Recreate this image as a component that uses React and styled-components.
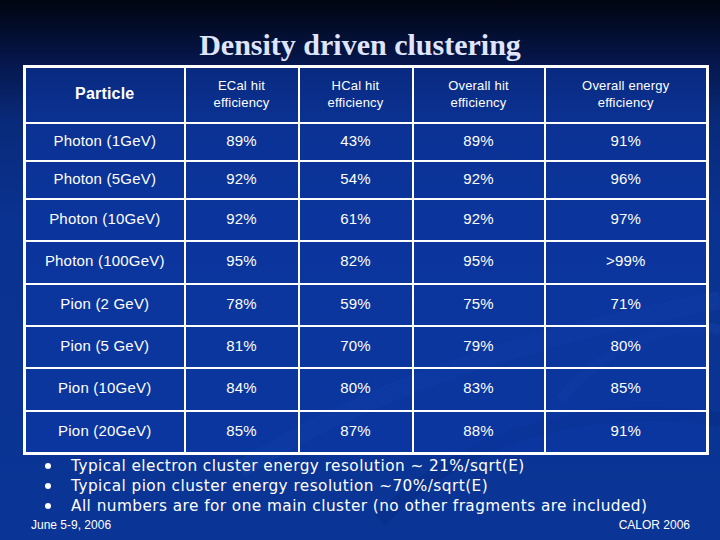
import React from 'react'
import styled, {createGlobalStyle} from 'styled-components'

const Global = createGlobalStyle`
  html, body {
    margin: 0;
    padding: 0;
    background: #0a3596;
  }
`

const Slide = styled.div`
  position: relative;
  width: 720px;
  height: 540px;
  overflow: hidden;
  background: linear-gradient(to bottom, #000510 0px, #05164a 60px, #092a7a 120px, #0a3290 220px, #0a3596 540px);
  font-family: "Liberation Sans", Arial, sans-serif;
  color: #fff;
`

const Swoosh = styled.svg`
  position: absolute;
  left: 0;
  top: 0;
  pointer-events: none;
`

const Content = styled.div`
  position: relative;
  display: flex;
  flex-direction: column;
  height: 100%;
  box-sizing: border-box;
`

const Title = styled.h1`
  margin: 0;
  height: 65px;
  padding-top: 29px;
  box-sizing: border-box;
  text-align: center;
  font-family: "Liberation Serif", "Times New Roman", serif;
  font-weight: 700;
  font-size: 30px;
  line-height: 32px;
  color: #dfe4ff;
`

const Table = styled.table`
  margin-left: 23px;
  width: 686px;
  border-collapse: collapse;
  border: 3px solid #fff;
  table-layout: fixed;
  background: rgba(12, 56, 168, 0.55);
`

const Cell = styled.td`
  border: 2px solid #fff;
  padding: 0 0 2px 0;
  text-align: center;
  vertical-align: middle;
  font-size: ${p => (p.$head ? '13px' : '15px')};
  font-weight: ${p => (p.$bold ? 700 : 400)};
  line-height: ${p => (p.$head ? '17px' : '18px')};
  letter-spacing: 0.2px;
  color: #fff;
  ${p => p.$bold && 'font-size: 16px;'}
`

const Row = styled.tr`
  height: ${p => p.$h}px;
`

const Bullets = styled.ul`
  margin: 1px 0 0 0;
  padding: 0;
  list-style: none;
`

const Bullet = styled.li`
  display: flex;
  align-items: center;
  height: 20px;
  font-family: "DejaVu Sans", Verdana, sans-serif;
  font-size: 15.3px;
  letter-spacing: 0.45px;
  color: #fff;
  &::before {
    content: '';
    width: 6px;
    height: 6px;
    border-radius: 50%;
    background: #fff;
    margin: 0 20px 0 45px;
  }
`

const Footer = styled.div`
  display: flex;
  justify-content: space-between;
  padding: 2px 30px 0 31px;
  font-size: 12px;
  color: #fff;
`

const widths = [160, 114, 114, 132, 163]
const heads = ['Particle', ['ECal hit', 'efficiency'], ['HCal hit', 'efficiency'], ['Overall hit', 'efficiency'], ['Overall energy', 'efficiency']]

const rows = [
  ['Photon (1GeV)', '89%', '43%', '89%', '91%', 38],
  ['Photon (5GeV)', '92%', '54%', '92%', '96%', 38],
  ['Photon (10GeV)', '92%', '61%', '92%', '97%', 42],
  ['Photon (100GeV)', '95%', '82%', '95%', '>99%', 43],
  ['Pion (2 GeV)', '78%', '59%', '75%', '71%', 42],
  ['Pion (5 GeV)', '81%', '70%', '79%', '80%', 42],
  ['Pion (10GeV)', '84%', '80%', '83%', '85%', 43],
  ['Pion (20GeV)', '85%', '87%', '88%', '91%', 43],
]

const notes = [
  'Typical electron cluster energy resolution ~ 21%/sqrt(E)',
  'Typical pion cluster energy resolution ~70%/sqrt(E)',
  'All numbers are for one main cluster (no other fragments are included)',
]

export default function App() {
  return <>
    <Global />
    <Slide>
      <Swoosh width="720" height="540" viewBox="0 0 720 540">
        <path d="M240 470 C 380 380, 560 330, 720 300" fill="none" stroke="#1d4cb4" strokeOpacity="0.25" strokeWidth="18" />
        <path d="M380 520 C 470 430, 600 400, 720 420" fill="none" stroke="#072a80" strokeOpacity="0.45" strokeWidth="14" />
        <path d="M560 400 C 620 330, 690 320, 720 330" fill="none" stroke="#2352b8" strokeOpacity="0.22" strokeWidth="10" />
      </Swoosh>
      <Content>
        <Title>Density driven clustering</Title>
        <Table>
          <colgroup>
            {widths.map((w, i) => <col key={i} style={{width: w}} />)}
          </colgroup>
          <tbody>
            <Row $h={56}>
              {heads.map((h, i) =>
                <Cell key={i} $head $bold={i === 0}>
                  {Array.isArray(h) ? <>{h[0]}<br />{h[1]}</> : h}
                </Cell>)}
            </Row>
            {rows.map(r =>
              <Row key={r[0]} $h={r[5]}>
                {r.slice(0, 5).map((c, i) => <Cell key={i}>{c}</Cell>)}
              </Row>)}
          </tbody>
        </Table>
        <Bullets>
          {notes.map(n => <Bullet key={n}>{n}</Bullet>)}
        </Bullets>
        <Footer>
          <span>June 5-9, 2006</span>
          <span>CALOR 2006</span>
        </Footer>
      </Content>
    </Slide>
  </>
}
